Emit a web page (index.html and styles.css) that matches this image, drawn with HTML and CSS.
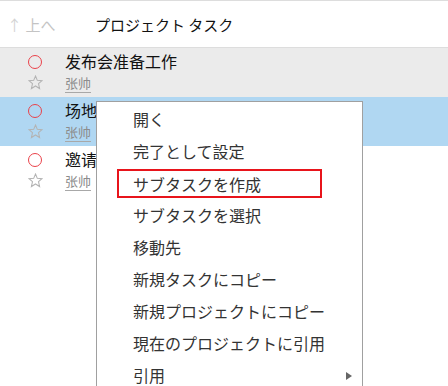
FILE: index.html
```html
<!DOCTYPE html>
<html lang="zh">
<head>
<meta charset="UTF-8">
<meta name="viewport" content="width=device-width, initial-scale=1.0">
<title>プロジェクト タスク</title>
<link rel="stylesheet" href="styles.css">
</head>
<body>
<div class="page">
    <div class="header">
        <span class="back"><span class="back-arrow">↑</span> 上へ</span>
        <span class="header-title">プロジェクト タスク</span>
    </div>

    <div class="task task-grey">
        <div class="task-icons">
            <span class="circle"></span>
            <svg class="star" viewBox="0 0 14 14"><path d="M7 1 L8.7 5 L13 5.3 L9.8 8.1 L10.8 12.6 L7 10.2 L3.2 12.6 L4.2 8.1 L1 5.3 L5.3 5 Z"/></svg>
        </div>
        <div class="task-text">
            <div class="task-title">发布会准备工作</div>
            <div class="task-owner"><span>张帅</span></div>
        </div>
    </div>
    <div class="task task-selected">
        <div class="task-icons">
            <span class="circle"></span>
            <svg class="star" viewBox="0 0 14 14"><path d="M7 1 L8.7 5 L13 5.3 L9.8 8.1 L10.8 12.6 L7 10.2 L3.2 12.6 L4.2 8.1 L1 5.3 L5.3 5 Z"/></svg>
        </div>
        <div class="task-text">
            <div class="task-title">场地布置</div>
            <div class="task-owner"><span>张帅</span></div>
        </div>
    </div>
    <div class="task">
        <div class="task-icons">
            <span class="circle"></span>
            <svg class="star" viewBox="0 0 14 14"><path d="M7 1 L8.7 5 L13 5.3 L9.8 8.1 L10.8 12.6 L7 10.2 L3.2 12.6 L4.2 8.1 L1 5.3 L5.3 5 Z"/></svg>
        </div>
        <div class="task-text">
            <div class="task-title">邀请嘉宾</div>
            <div class="task-owner"><span>张帅</span></div>
        </div>
    </div>

    <!-- context menu -->
    <ul class="menu">
        <li>開く</li>
        <li>完了として設定</li>
        <li class="marked">サブタスクを作成</li>
        <li>サブタスクを選択</li>
        <li>移動先</li>
        <li>新規タスクにコピー</li>
        <li>新規プロジェクトにコピー</li>
        <li>現在のプロジェクトに引用</li>
        <li class="has-sub">引用</li>
    </ul>
</div>
</body>
</html>
```

FILE: styles.css
```css
/* Global styles */
body {
    margin: 0;
    padding: 0;
    background-color: #fff;
    font-family: "Noto Sans CJK SC", "Noto Sans CJK JP", "Liberation Sans", sans-serif;
    overflow: hidden;
}
.page {
    position: relative;
    width: 448px;
    height: 386px;
    overflow: hidden;
}
.header {
    display: flex;
    align-items: center;
    height: 46px;
    border-top: 1px solid #dddddd;
    border-bottom: 1px solid #dddddd;
}
.back {
    width: 95px;
    padding-left: 7px;
    box-sizing: border-box;
    font-size: 15px;
    color: #c4c4c4;
}
.back-arrow {
    color: #d4d4d4;
}
.header-title {
    font-size: 15px;
    color: #111;
}
.task {
    display: flex;
    height: 49px;
    padding-top: 2px;
    padding-left: 28px;
    box-sizing: border-box;
}
.task-grey {
    background-color: #ebebeb;
}
.task-selected {
    background-color: #b0d7f2;
}
.task-icons {
    display: flex;
    flex-direction: column;
    align-items: center;
    width: 14px;
    margin-top: 2px;
    margin-right: 23px;
}
.circle {
    display: block;
    width: 14px;
    height: 14px;
    margin-top: 3px;
    box-sizing: border-box;
    border: 1.5px solid #ea424a;
    border-radius: 50%;
}
.star {
    width: 15px;
    height: 15px;
    margin-top: 6px;
    fill: none;
    stroke: #b4b4b4;
    stroke-width: 1;
}
.task-title {
    font-size: 16px;
    line-height: 23px;
    color: #111;
}
.task-owner {
    font-size: 13px;
    line-height: 19px;
    color: #8c8c8c;
}
.task-owner span {
    border-bottom: 1px solid #a8a8a8;
}
.menu {
    position: absolute;
    left: 96px;
    top: 101px;
    width: 267px;
    height: 300px;
    margin: 0;
    padding: 1px 0 0 0;
    box-sizing: border-box;
    list-style: none;
    background-color: #fff;
    border: 1px solid #a0a0a0;
}
.menu li {
    position: relative;
    height: 32px;
    line-height: 32px;
    padding-left: 36px;
    font-size: 16px;
    color: #333;
}
.menu li.marked {
    width: 205px;
    height: 29px;
    line-height: 27px;
    margin-top: 2px;
    margin-left: 20px;
    margin-bottom: 1px;
    padding-left: 14px;
    box-sizing: border-box;
    border: 2px solid #e8141b;
}
.menu li.has-sub::after {
    content: "";
    position: absolute;
    right: 10px;
    top: 13px;
    border-left: 6px solid #666;
    border-top: 4px solid transparent;
    border-bottom: 4px solid transparent;
}
```
